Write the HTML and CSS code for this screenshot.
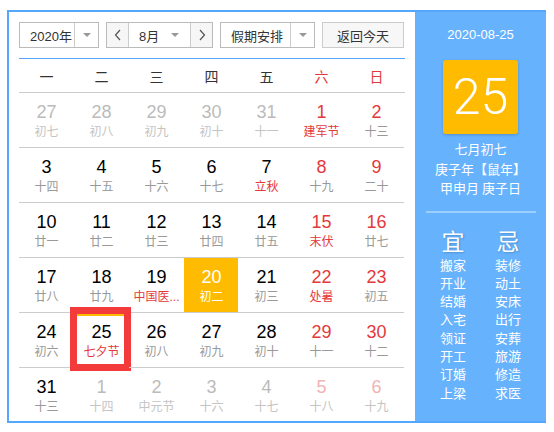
FILE: index.html
```html
<!DOCTYPE html>
<html lang="zh">
<head>
<meta charset="utf-8">
<link rel="stylesheet" href="styles.css">
</head>
<body>
<div class="cal">
  <div class="main">
    <div class="toolbar">
      <div class="sel sel-year"><span class="sel-text">2020年</span><span class="sel-arrow"><i class="tri"></i></span></div>
      <div class="sel sel-month">
        <span class="nav"><svg width="8" height="12" viewBox="0 0 8 12"><polyline points="6,1 1.5,6 6,11" fill="none" stroke="#555" stroke-width="1.2"/></svg></span>
        <span class="sel-text mid">8月<i class="tri"></i></span>
        <span class="nav"><svg width="8" height="12" viewBox="0 0 8 12"><polyline points="2,1 6.5,6 2,11" fill="none" stroke="#555" stroke-width="1.2"/></svg></span>
      </div>
      <div class="sel sel-holiday"><span class="sel-text">假期安排</span><span class="sel-arrow"><i class="tri"></i></span></div>
      <div class="btn-today">返回今天</div>
    </div>
    <div class="weekdays">
      <span>一</span><span>二</span><span>三</span><span>四</span><span>五</span><span class="red">六</span><span class="red">日</span>
    </div>
    <div class="days">
      <div class="day other"><b>27</b><s>初七</s></div>
      <div class="day other"><b>28</b><s>初八</s></div>
      <div class="day other"><b>29</b><s>初九</s></div>
      <div class="day other"><b>30</b><s>初十</s></div>
      <div class="day other"><b>31</b><s>十一</s></div>
      <div class="day wkend"><b>1</b><s class="fest">建军节</s></div>
      <div class="day wkend"><b>2</b><s>十三</s></div>

      <div class="day"><b>3</b><s>十四</s></div>
      <div class="day"><b>4</b><s>十五</s></div>
      <div class="day"><b>5</b><s>十六</s></div>
      <div class="day"><b>6</b><s>十七</s></div>
      <div class="day"><b>7</b><s class="fest">立秋</s></div>
      <div class="day wkend"><b>8</b><s>十九</s></div>
      <div class="day wkend"><b>9</b><s>二十</s></div>

      <div class="day"><b>10</b><s>廿一</s></div>
      <div class="day"><b>11</b><s>廿二</s></div>
      <div class="day"><b>12</b><s>廿三</s></div>
      <div class="day"><b>13</b><s>廿四</s></div>
      <div class="day"><b>14</b><s>廿五</s></div>
      <div class="day wkend"><b>15</b><s class="fest">末伏</s></div>
      <div class="day wkend"><b>16</b><s>廿七</s></div>

      <div class="day"><b>17</b><s>廿八</s></div>
      <div class="day"><b>18</b><s>廿九</s></div>
      <div class="day"><b>19</b><s class="fest">中国医...</s></div>
      <div class="day today"><b>20</b><s>初二</s></div>
      <div class="day"><b>21</b><s>初三</s></div>
      <div class="day wkend"><b>22</b><s class="fest">处暑</s></div>
      <div class="day wkend"><b>23</b><s>初五</s></div>

      <div class="day"><b>24</b><s>初六</s></div>
      <div class="day selected"><b>25</b><s class="fest">七夕节</s><span class="mark"></span></div>
      <div class="day"><b>26</b><s>初八</s></div>
      <div class="day"><b>27</b><s>初九</s></div>
      <div class="day"><b>28</b><s>初十</s></div>
      <div class="day wkend"><b>29</b><s>十一</s></div>
      <div class="day wkend"><b>30</b><s>十二</s></div>

      <div class="day last"><b>31</b><s>十三</s></div>
      <div class="day last other"><b>1</b><s>十四</s></div>
      <div class="day last other"><b>2</b><s>中元节</s></div>
      <div class="day last other"><b>3</b><s>十六</s></div>
      <div class="day last other"><b>4</b><s>十七</s></div>
      <div class="day last other owk"><b>5</b><s>十八</s></div>
      <div class="day last other owk"><b>6</b><s>十九</s></div>
    </div>
  </div>
  <div class="side">
    <div class="side-date">2020-08-25</div>
    <div class="side-day">25</div>
    <div class="side-lunar">
      <div>七月初七</div>
      <div>庚子年【鼠年】</div>
      <div>甲申月 庚子日</div>
    </div>
    <div class="side-line"></div>
    <div class="side-yiji">
      <div class="yj-col">
        <div class="yj-head">宜</div>
        <div>搬家</div><div>开业</div><div>结婚</div><div>入宅</div><div>领证</div><div>开工</div><div>订婚</div><div>上梁</div>
      </div>
      <div class="yj-col">
        <div class="yj-head">忌</div>
        <div>装修</div><div>动土</div><div>安床</div><div>出行</div><div>安葬</div><div>旅游</div><div>修造</div><div>求医</div>
      </div>
    </div>
  </div>
</div>
</body>
</html>
```

FILE: styles.css
```css
* { box-sizing: border-box; }
body {
  margin: 0;
  background: #fff;
  font-family: "Liberation Sans", "Noto Sans CJK SC", sans-serif;
  color: #333;
}
.cal {
  margin: 10px 0 0 7px;
  width: 539px;
  height: 413px;
  border: 2px solid #55a7fd;
  border-right: none;
  display: flex;
}
.main {
  width: 406px;
  padding: 10px 10px 0 10px;
}
.toolbar {
  display: flex;
  gap: 7px;
  height: 26px;
  font-size: 13px;
}
.sel {
  display: flex;
  border: 1px solid #bbb;
  height: 26px;
  background: #fff;
}
.sel-text {
  display: flex;
  align-items: center;
  padding-left: 10px;
  flex: 1;
}
.sel-arrow {
  width: 24px;
  border-left: 1px solid #ccc;
  display: flex;
  align-items: center;
  justify-content: center;
}
.tri {
  display: inline-block;
  width: 0;
  height: 0;
  border-left: 4px solid transparent;
  border-right: 4px solid transparent;
  border-top: 4px solid #999;
}
.sel-year { width: 80px; }
.sel-month { width: 107px; }
.sel-holiday { width: 95px; }
.nav {
  width: 21px;
  background: #f6f6f6;
  display: flex;
  align-items: center;
  justify-content: center;
}
.mid {
  border-left: 1px solid #ccc;
  border-right: 1px solid #ccc;
  justify-content: space-between;
  padding-right: 11px;
  width: 63px;
  flex: none;
}
.btn-today {
  width: 82px;
  border: 1px solid #ccc;
  background: #f7f7f7;
  display: flex;
  align-items: center;
  justify-content: center;
}
.weekdays {
  margin-top: 10px;
  border-top: 1px solid #55a7fd;
  border-bottom: 1px solid #ccc;
  height: 35px;
  display: grid;
  grid-template-columns: repeat(7, 55px);
  align-items: center;
  font-size: 14px;
  text-align: center;
}
.red { color: #e4393c; }
.days {
  display: grid;
  grid-template-columns: repeat(7, 55px);
}
.day {
  height: 55px;
  border-bottom: 1px solid #ccc;
  text-align: center;
  padding-top: 8px;
  position: relative;
}
.day.last { border-bottom: none; }
.day b {
  display: block;
  font-weight: normal;
  font-size: 18px;
  line-height: 22px;
  color: #000;
}
.day s {
  display: block;
  text-decoration: none;
  font-size: 12px;
  line-height: 18px;
  color: #999;
  white-space: nowrap;
}
.day.wkend b { color: #e4393c; }
.day s.fest { color: #e4393c; }
.day.other b { color: #bbb; }
.day.other s { color: #c4c4c4; }
.day.owk b { color: #f2b3b4; }
.today {
  background: linear-gradient(#ffbb00, #ffbb00) no-repeat 0 0 / 54px 54px;
}
.today b, .today s { color: #fff; }
.selected::before {
  content: "";
  position: absolute;
  left: 0;
  right: 1px;
  top: 1px;
  height: 2px;
  background: #ffbb00;
}
.mark {
  position: absolute;
  left: -4px;
  top: -6px;
  width: 61px;
  height: 64px;
  border: 7px solid #f33b3b;
}
.side {
  width: 131px;
  background: #67b2fd;
  color: #fff;
  display: flex;
  flex-direction: column;
  align-items: center;
  padding-top: 14px;
  font-family: "Noto Sans CJK SC", "Liberation Sans", sans-serif;
}
.side-date {
  font-family: "Liberation Sans", sans-serif;
  font-size: 13px;
  line-height: 18px;
}
.side-day {
  margin-top: 16px;
  width: 75px;
  height: 74px;
  background: #ffbb00;
  border-radius: 3px;
  box-shadow: 0 1px 3px rgba(0, 0, 0, 0.2);
  font-family: Roboto, "Liberation Sans", sans-serif;
  font-weight: 300;
  font-size: 50px;
  line-height: 74px;
  text-align: center;
}
.side-lunar {
  margin-top: 5px;
  font-size: 13px;
  line-height: 19.5px;
  text-align: center;
}
.side-line {
  margin-top: 13px;
  width: 110px;
  height: 2px;
  background: #9ccffd;
}
.side-yiji {
  margin-top: 11px;
  display: flex;
  width: 110px;
}
.yj-col {
  width: 55px;
  text-align: center;
  font-size: 13px;
  line-height: 18.3px;
}
.yj-head {
  font-size: 23px;
  line-height: 32px;
  text-shadow: 1px 1px 2px rgba(0, 0, 0, 0.2);
}
```
